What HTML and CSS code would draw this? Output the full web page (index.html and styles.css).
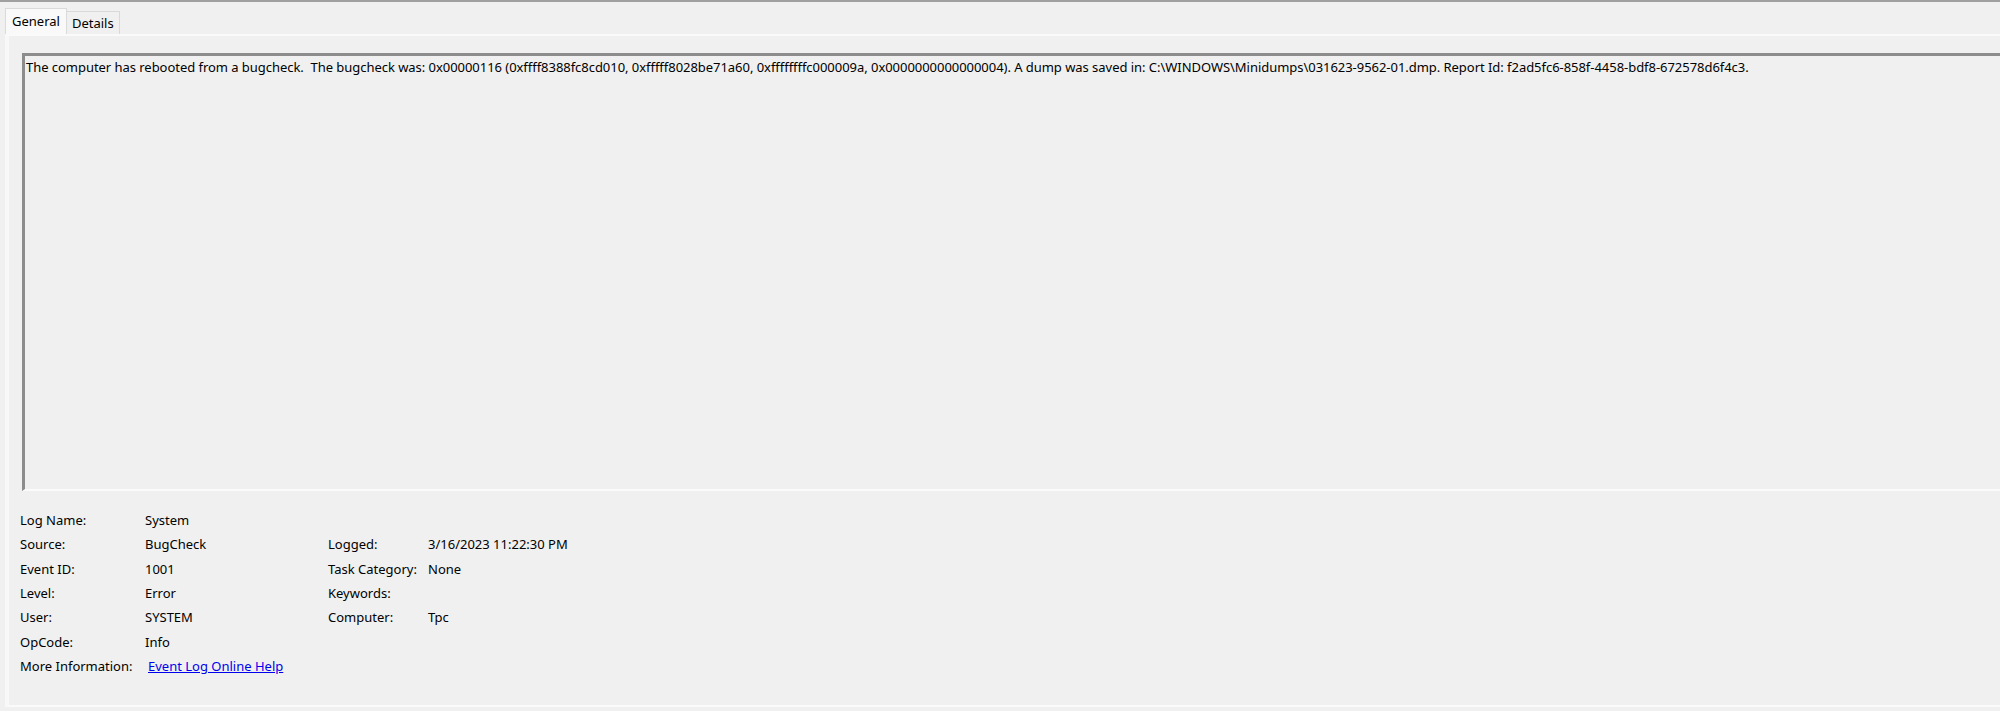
FILE: index.html
```html
<!DOCTYPE html>
<html lang="en">
<head>
    <meta charset="UTF-8">
    <title>Event Properties</title>
    <link rel="stylesheet" href="styles.css">
</head>
<body>
    <div class="top-line"></div>

    <div class="tabs">
        <div class="tab active">General</div>
        <div class="tab">Details</div>
    </div>

    <div class="tab-panel">
        <div class="message-box">
            The computer has rebooted from a bugcheck.&nbsp; The bugcheck was: 0x00000116 (0xffff8388fc8cd010, 0xfffff8028be71a60, 0xffffffffc000009a, 0x0000000000000004). A dump was saved in: C:\WINDOWS\Minidumps\031623-9562-01.dmp. Report Id: f2ad5fc6-858f-4458-bdf8-672578d6f4c3.
        </div>

        <div class="details">
            <span class="label">Log Name:</span>
            <span class="value">System</span>
            <span></span><span></span>

            <span class="label">Source:</span>
            <span class="value">BugCheck</span>
            <span class="label">Logged:</span>
            <span class="value">3/16/2023 11:22:30 PM</span>

            <span class="label">Event ID:</span>
            <span class="value">1001</span>
            <span class="label">Task Category:</span>
            <span class="value">None</span>

            <span class="label">Level:</span>
            <span class="value">Error</span>
            <span class="label">Keywords:</span>
            <span class="value"></span>

            <span class="label">User:</span>
            <span class="value">SYSTEM</span>
            <span class="label">Computer:</span>
            <span class="value">Tpc</span>

            <span class="label">OpCode:</span>
            <span class="value">Info</span>
            <span></span><span></span>

            <span class="label">More Information:</span>
            <span class="value"><a href="#" class="help-link">Event Log Online Help</a></span>
            <span></span><span></span>
        </div>
    </div>
</body>
</html>
```

FILE: styles.css
```css
* {
    margin: 0;
    padding: 0;
    box-sizing: border-box;
}
html, body {
    height: 100%;
}
body {
    background-color: #f0f0f0;
    color: #000;
    font-family: "Noto Sans", "Open Sans", sans-serif;
    font-size: 13px;
    overflow: hidden;
}
.top-line {
    height: 2px;
    background-color: #a0a0a0;
}
.tabs {
    display: flex;
    align-items: flex-end;
    height: 32px;
    padding-left: 5px;
}
.tab {
    padding: 0 5px;
    height: 23px;
    line-height: 22px;
    border: 1px solid #d9d9d9;
    border-bottom: none;
    background-color: #f0f0f0;
}
.tab.active {
    height: 26px;
    line-height: 24px;
    padding: 0 6px;
    background-color: #f9f9f9;
    border-color: #dadada;
    margin-right: -1px;
    position: relative;
    z-index: 1;
}
.tab-panel {
    margin-left: 5px;
    height: 673px;
    border-top: 2px solid #fafafa;
    border-left: 4px solid #f8f8f8;
    border-bottom: 2px solid #fafafa;
    padding: 17px 0 0 11px;
}
.message-box {
    height: 438px;
    margin-left: 2px;
    margin-right: -20px;
    border-top: 3px solid #8c8c8c;
    border-left: 3px solid #8c8c8c;
    border-bottom: 2px solid #fbfbfb;
    padding: 3px 1px;
    line-height: 17px;
    letter-spacing: -0.04px;
    white-space: nowrap;
}
.details {
    display: grid;
    grid-template-columns: 125px 183px 100px auto;
    grid-auto-rows: 24.33px;
    align-items: center;
    padding: 17px 0 0 0;
}
.help-link {
    color: #0000ee;
    margin-left: 3px;
}
```
